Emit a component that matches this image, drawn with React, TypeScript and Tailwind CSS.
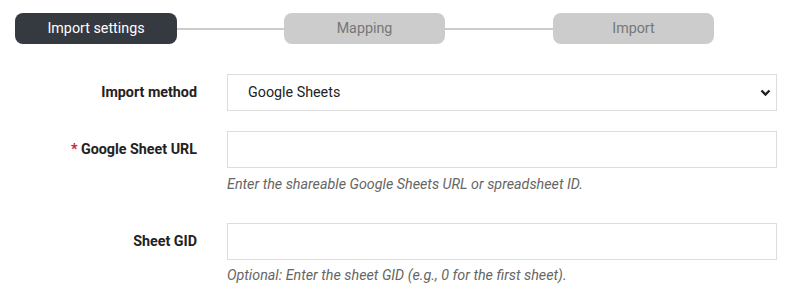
import React from "react";

export default function App() {
  const font = { fontFamily: '"Roboto", "Liberation Sans", sans-serif' };
  return (
    <div className="w-[800px] h-[300px] bg-white text-[14.3px] text-[#222]" style={font}>
      <div className="flex items-center pl-[15px] pt-[13px]">
        <div className="w-[162px] h-[31px] rounded-[8px] bg-[#343a40] text-white flex items-center justify-center">Import settings</div>
        <div className="w-[107px] h-[2px] bg-[#cccccc]" />
        <div className="w-[161px] h-[31px] rounded-[8px] bg-[#cccccc] text-[#777] flex items-center justify-center">Mapping</div>
        <div className="w-[108px] h-[2px] bg-[#cccccc]" />
        <div className="w-[161px] h-[31px] rounded-[8px] bg-[#cccccc] text-[#777] flex items-center justify-center">Import</div>
      </div>
      <div className="pt-[30px] flex flex-col">
        <div className="flex items-center">
          <label className="w-[197px] text-right font-bold">Import method</label>
          <div className="ml-[30px] w-[550px] relative">
            <select className="appearance-none w-full h-[37px] border border-[#dddddd] bg-white pl-[20px] text-[14.3px] text-[#222] outline-none" style={font} defaultValue="gs">
              <option value="gs">Google Sheets</option>
            </select>
            <svg className="absolute right-[6px] top-[15px] pointer-events-none" width="11" height="8" viewBox="0 0 11 8">
              <path d="M1.5 1.5 L5.5 5.5 L9.5 1.5" fill="none" stroke="#222" strokeWidth="2.4" />
            </svg>
          </div>
        </div>
        <div className="flex items-center mt-[20px]">
          <label className="w-[197px] text-right font-bold"><span className="text-[#cc2222]">*</span> Google Sheet URL</label>
          <input className="ml-[30px] w-[550px] h-[37px] border border-[#dddddd] outline-none px-3" />
        </div>
        <div className="ml-[227px] mt-[6px] italic text-[#666] leading-[20px]">Enter the shareable Google Sheets URL or spreadsheet ID.</div>
        <div className="flex items-center mt-[29px]">
          <label className="w-[197px] text-right font-bold">Sheet GID</label>
          <input className="ml-[30px] w-[550px] h-[37px] border border-[#dddddd] outline-none px-3" />
        </div>
        <div className="ml-[227px] mt-[5px] italic text-[#666] leading-[20px]">Optional: Enter the sheet GID (e.g., 0 for the first sheet).</div>
      </div>
    </div>
  );
}
